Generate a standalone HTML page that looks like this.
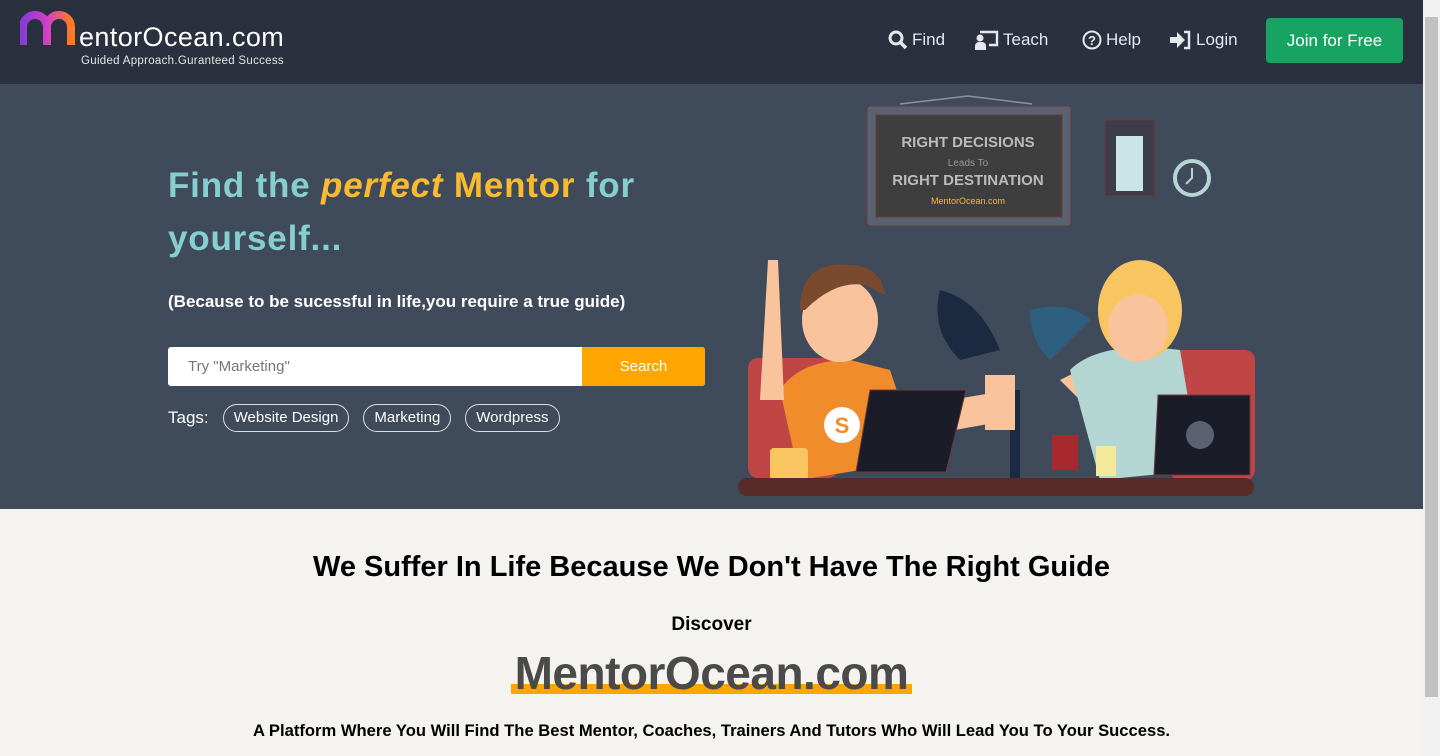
<!DOCTYPE html>
<html><head><meta charset="utf-8">
<style>
*{margin:0;padding:0;box-sizing:border-box}
body{width:1440px;height:756px;overflow:hidden;font-family:"Liberation Sans",sans-serif;background:#f4f3f0;position:relative}
.nav{position:absolute;left:0;top:0;width:1423px;height:84px;background:#2a303d}
.hero{position:absolute;left:0;top:84px;width:1423px;height:425px;background:#3f4a5a}
.sb{position:absolute;right:0;top:0;width:17px;height:756px;background:#f1f1f1}
.sb div{position:absolute;left:2px;top:17px;width:13px;height:680px;background:#c1c1c1}
.navlink{position:absolute;top:30px;color:#e6e8ee;font-size:17px;display:flex;align-items:center;gap:4px}
.join{position:absolute;left:1266px;top:18px;width:137px;height:45px;background:#17a463;border-radius:4px;color:#fff;font-size:17px;text-align:center;line-height:45px}
h1{position:absolute;left:168px;top:75px;font-size:35px;line-height:53px;color:#86cfd0;font-weight:bold;width:540px;letter-spacing:0.8px}
h1 .y{color:#fbbb30}
.sub{position:absolute;left:168px;top:208px;color:#fff;font-size:17px;font-weight:bold}
.search{position:absolute;left:168px;top:263px;width:537px;height:39px;background:#fff;border-radius:3px;overflow:hidden}
.search span{position:absolute;left:20px;top:11px;color:#777;font-size:15px}
.search b{position:absolute;right:0;top:0;width:123px;height:39px;background:#fea500;color:#fff;font-weight:normal;font-size:15px;text-align:center;line-height:39px}
.tags{position:absolute;left:168px;top:320px;color:#fff;font-size:17px;display:flex;align-items:center;gap:10px}
.tag{border:1px solid #ddd;border-radius:15px;height:28px;padding:0 10px;line-height:26px;font-size:15px;margin-left:4px}
.c{position:absolute;left:0;width:1423px;text-align:center;color:#000;font-weight:bold}
</style></head><body>
<div class="nav">
<svg style="position:absolute;left:20px;top:11px" width="60" height="36" viewBox="0 0 60 36"><defs><linearGradient id="g" x1="0" x2="1"><stop offset="0" stop-color="#8b3bd8"/><stop offset=".5" stop-color="#d040c8"/><stop offset="1" stop-color="#ff7a20"/></linearGradient></defs><path d="M3 34V16a12 12 0 0 1 24 0v18M27 16a12 12 0 0 1 24 0v18" fill="none" stroke="url(#g)" stroke-width="8"/></svg>
<div style="position:absolute;left:79px;top:22px;color:#fff;font-size:27px;letter-spacing:0.4px">entorOcean.com</div>
<div style="position:absolute;left:81px;top:55px;color:#e6e6e6;font-size:11.5px;letter-spacing:0.3px">Guided Approach.Guranteed Success</div>
<div class="navlink" style="left:888px"><svg width="20" height="20" viewBox="0 0 20 20"><circle cx="8" cy="8" r="6" fill="none" stroke="#e6e8ee" stroke-width="3"/><path d="M12 12l6 6" stroke="#e6e8ee" stroke-width="3.5"/></svg>Find</div>
<div class="navlink" style="left:975px"><svg width="24" height="20" viewBox="0 0 24 20"><path d="M5 2h17v13h-8" fill="none" stroke="#e6e8ee" stroke-width="2.4"/><circle cx="5" cy="8" r="3.5" fill="#e6e8ee"/><path d="M0 20v-4a4 4 0 0 1 4-4h3a4 4 0 0 1 4 4v4z" fill="#e6e8ee"/></svg>Teach</div>
<div class="navlink" style="left:1082px"><svg width="20" height="20" viewBox="0 0 20 20"><circle cx="10" cy="10" r="8.5" fill="none" stroke="#e6e8ee" stroke-width="2"/><text x="10" y="15" font-size="13" font-weight="bold" text-anchor="middle" fill="#e6e8ee" font-family="Liberation Sans">?</text></svg>Help</div>
<div class="navlink" style="left:1170px"><svg width="22" height="20" viewBox="0 0 22 20"><path d="M0 7h7V2l8 8-8 8v-5H0z" fill="#e6e8ee"/><path d="M14 2h5v16h-5" fill="none" stroke="#e6e8ee" stroke-width="2.5"/></svg>Login</div>
<div class="join">Join for Free</div>
</div>
<div class="hero">
<h1>Find the <i class="y">perfect</i> <span class="y">Mentor</span> for yourself...</h1>
<div class="sub">(Because to be sucessful in life,you require a true guide)</div>
<div class="search"><span>Try "Marketing"</span><b>Search</b></div>
<div class="tags">Tags: <span class="tag">Website Design</span><span class="tag">Marketing</span><span class="tag">Wordpress</span></div>
<svg style="position:absolute;left:730px;top:6px" width="540" height="420" viewBox="0 0 540 420">
<path d="M170 14L238 6L302 14" fill="none" stroke="#8a93a3" stroke-width="1.5"/>
<rect x="137" y="16" width="204" height="120" rx="3" fill="#5a6170" stroke="#6b3a3a"/>
<rect x="146" y="25" width="186" height="102" fill="#3e3e3e" stroke="#6b3a3a"/>
<text x="238" y="57" text-anchor="middle" fill="#bbb" font-size="15" font-weight="bold" font-family="Liberation Sans">RIGHT DECISIONS</text>
<text x="238" y="76" text-anchor="middle" fill="#999" font-size="10" font-family="Liberation Sans">Leads To</text>
<text x="238" y="95" text-anchor="middle" fill="#bbb" font-size="15" font-weight="bold" font-family="Liberation Sans">RIGHT DESTINATION</text>
<text x="238" y="114" text-anchor="middle" fill="#fbbb30" font-size="9" font-family="Liberation Sans">MentorOcean.com</text>
<rect x="375" y="30" width="50" height="76" fill="#3d3d4a" stroke="#6b3a3a"/>
<rect x="386" y="46" width="27" height="55" fill="#c9e4e4"/>
<circle cx="462" cy="88" r="17" fill="none" stroke="#b8d4d4" stroke-width="4"/>
<path d="M462 78v10l-6 6" stroke="#b8d4d4" stroke-width="2" fill="none"/>
<path d="M210 200q40 10 60 60l-40 10q-30-30-20-70z" fill="#1b2a40"/>
<path d="M300 220q40-10 60 10l-40 40q-20-20-20-50z" fill="#2f5f80"/>
<rect x="280" y="300" width="10" height="90" fill="#1b2a40"/>
<rect x="18" y="268" width="90" height="120" rx="10" fill="#c04545"/>
<rect x="440" y="260" width="85" height="130" rx="10" fill="#c04545"/>
<path d="M50 300q20-30 70-30l40 10 30 90-120 20z" fill="#f08c2a"/>
<circle cx="112" cy="335" r="18" fill="#fff"/>
<text x="112" y="343" text-anchor="middle" fill="#f08c2a" font-size="22" font-weight="bold" font-family="Liberation Sans">S</text>
<ellipse cx="110" cy="230" rx="38" ry="42" fill="#f9c39c"/>
<path d="M70 220q0-50 50-45 30 0 35 30l-20-10q-30-5-60 25z" fill="#7a4a2e"/>
<path d="M30 310l8-140h10l6 140z" fill="#f9c39c"/>
<path d="M220 310l60-10 0 30-55 10z" fill="#f9c39c"/>
<path d="M330 290l60-30 20 30-60 20z" fill="#f9c39c"/>
<path d="M340 280q30-30 110-20l20 120-100 10z" fill="#b3d6d3"/>
<ellipse cx="410" cy="220" rx="42" ry="50" fill="#f9c560"/>
<ellipse cx="408" cy="238" rx="30" ry="34" fill="#f9c39c"/>
<path d="M255 285h30v55h-30z" fill="#f9c39c"/>
<path d="M140 300h96l-20 82h-90z" fill="#1a1d28" stroke="#6b3a3a"/>
<path d="M428 305h92v80h-96z" fill="#1a1d28" stroke="#6b3a3a"/>
<circle cx="470" cy="345" r="14" fill="#5a6170"/>
<rect x="322" y="345" width="26" height="35" fill="#a8282f"/>
<rect x="366" y="356" width="20" height="30" fill="#f4e89b"/>
<rect x="40" y="358" width="38" height="32" rx="4" fill="#f9c560"/>
<rect x="8" y="388" width="516" height="18" rx="9" fill="#562b28"/>
</svg>
</div>
<div class="c" style="top:551px;font-size:29px">We Suffer In Life Because We Don't Have The Right Guide</div>
<div class="c" style="top:614px;font-size:19px">Discover</div>
<div style="position:absolute;left:511px;top:648px;width:401px;height:46px;text-align:center">
<div style="position:absolute;left:0;bottom:0;width:401px;height:10px;background:#fea500"></div>
<div style="position:relative;font-size:46px;font-weight:bold;color:#4a4a4a;line-height:50px;letter-spacing:-0.5px">MentorOcean.com</div></div>
<div class="c" style="top:721px;font-size:16.6px">A Platform Where You Will Find The Best Mentor, Coaches, Trainers And Tutors Who Will Lead You To Your Success.</div>
<div class="sb"><div></div></div>
</body></html>
